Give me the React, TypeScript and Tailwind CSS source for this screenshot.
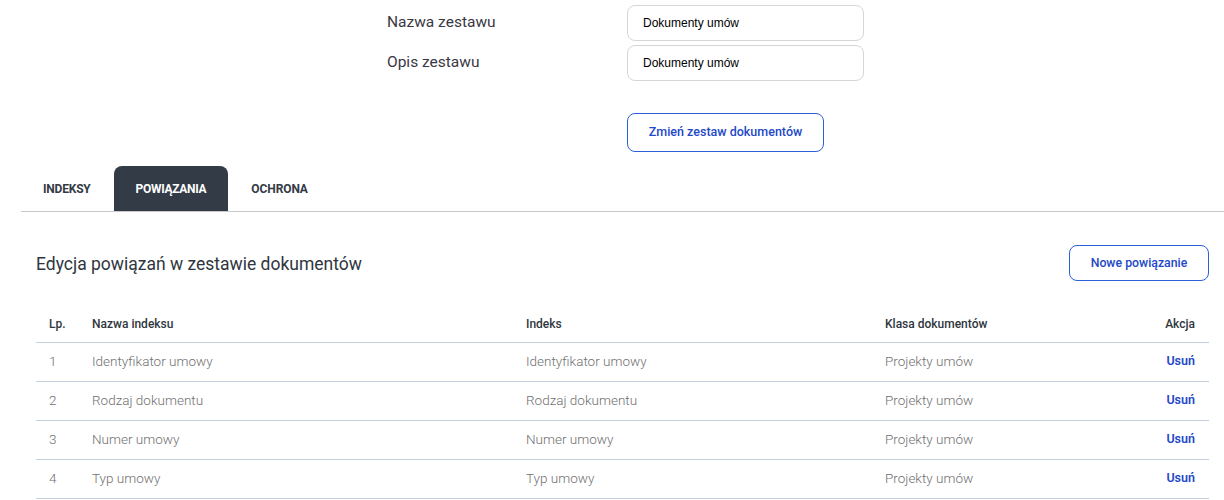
import React from "react";

const rows = [
  { lp: 1, name: "Identyfikator umowy", idx: "Identyfikator umowy", cls: "Projekty umów" },
  { lp: 2, name: "Rodzaj dokumentu", idx: "Rodzaj dokumentu", cls: "Projekty umów" },
  { lp: 3, name: "Numer umowy", idx: "Numer umowy", cls: "Projekty umów" },
  { lp: 4, name: "Typ umowy", idx: "Typ umowy", cls: "Projekty umów" },
];

export default function App() {
  return (
    <div className="w-[1224px] h-[500px] overflow-hidden bg-white font-['Roboto',sans-serif] text-[#333a44]">
      {/* Form */}
      <div className="pt-[5px] pl-[387px] flex flex-col">
        <div className="grid grid-cols-[240px_237px] gap-y-[4px] items-center">
          <div className="text-[15.5px] text-[#3a3744]">Nazwa zestawu</div>
          <div className="h-[36px] rounded-[8px] border border-[#d6d6d6] flex items-center pl-[15px] font-['Liberation_Sans',sans-serif] text-[12px] text-black">
            Dokumenty umów
          </div>
          <div className="text-[15.5px] text-[#3a3744]">Opis zestawu</div>
          <div className="h-[36px] rounded-[8px] border border-[#d6d6d6] flex items-center pl-[15px] font-['Liberation_Sans',sans-serif] text-[12px] text-black">
            Dokumenty umów
          </div>
          <div />
          <div className="pt-[28px]">
            <button className="w-[197px] h-[39px] rounded-[8px] border border-[#2c5fdc] text-[#2348c8] text-[12.5px] font-medium">
              Zmień zestaw dokumentów
            </button>
          </div>
        </div>
      </div>

      {/* Tabs */}
      <div className="mt-[14px] ml-[21px] flex border-b border-[#c9c9cd] h-[46px]">
        <div className="px-[22px] flex items-center text-[12px] font-bold text-[#333a44] tracking-[-0.2px]">INDEKSY</div>
        <div className="ml-[1px] px-[22px] flex items-center text-[12px] font-bold text-white bg-[#323b46] rounded-t-[8px] tracking-[-0.3px]">POWIĄZANIA</div>
        <div className="px-[23px] flex items-center text-[12px] font-bold text-[#333a44] tracking-[-0.1px]">OCHRONA</div>
      </div>

      {/* Section */}
      <div className="ml-[36px] mr-[15px]">
        <div className="mt-[33px] flex items-center justify-between h-[36px]">
          <h2 className="text-[17.5px] text-[#2f3640] pt-[2px]">Edycja powiązań w zestawie dokumentów</h2>
          <button className="w-[140px] h-[36px] rounded-[8px] border border-[#2c5fdc] text-[#2348c8] text-[12.3px] font-medium">
            Nowe powiązanie
          </button>
        </div>

        <table className="mt-[25px] w-full border-collapse">
          <thead>
            <tr className="h-[36px] border-b border-[#c3cfdd] text-[12px]">
              <th className="w-[56px] pl-[13px] text-left font-medium text-[#2f3640]">Lp.</th>
              <th className="w-[434px] text-left font-medium text-[#2f3640]">Nazwa indeksu</th>
              <th className="w-[359px] text-left font-medium text-[#2f3640]">Indeks</th>
              <th className="text-left font-medium text-[#2f3640]">Klasa dokumentów</th>
              <th className="pr-[14px] text-right font-medium text-[#2f3640]">Akcja</th>
            </tr>
          </thead>
          <tbody>
            {rows.map((r) => (
              <tr key={r.lp} className="h-[39px] border-b border-[#c3cfdd] text-[13.5px] text-[#707070] font-light">
                <td className="pl-[13px]">{r.lp}</td>
                <td>{r.name}</td>
                <td>{r.idx}</td>
                <td>{r.cls}</td>
                <td className="pr-[14px] text-right text-[12.5px] font-semibold text-[#2348c8]">Usuń</td>
              </tr>
            ))}
          </tbody>
        </table>
      </div>
    </div>
  );
}
